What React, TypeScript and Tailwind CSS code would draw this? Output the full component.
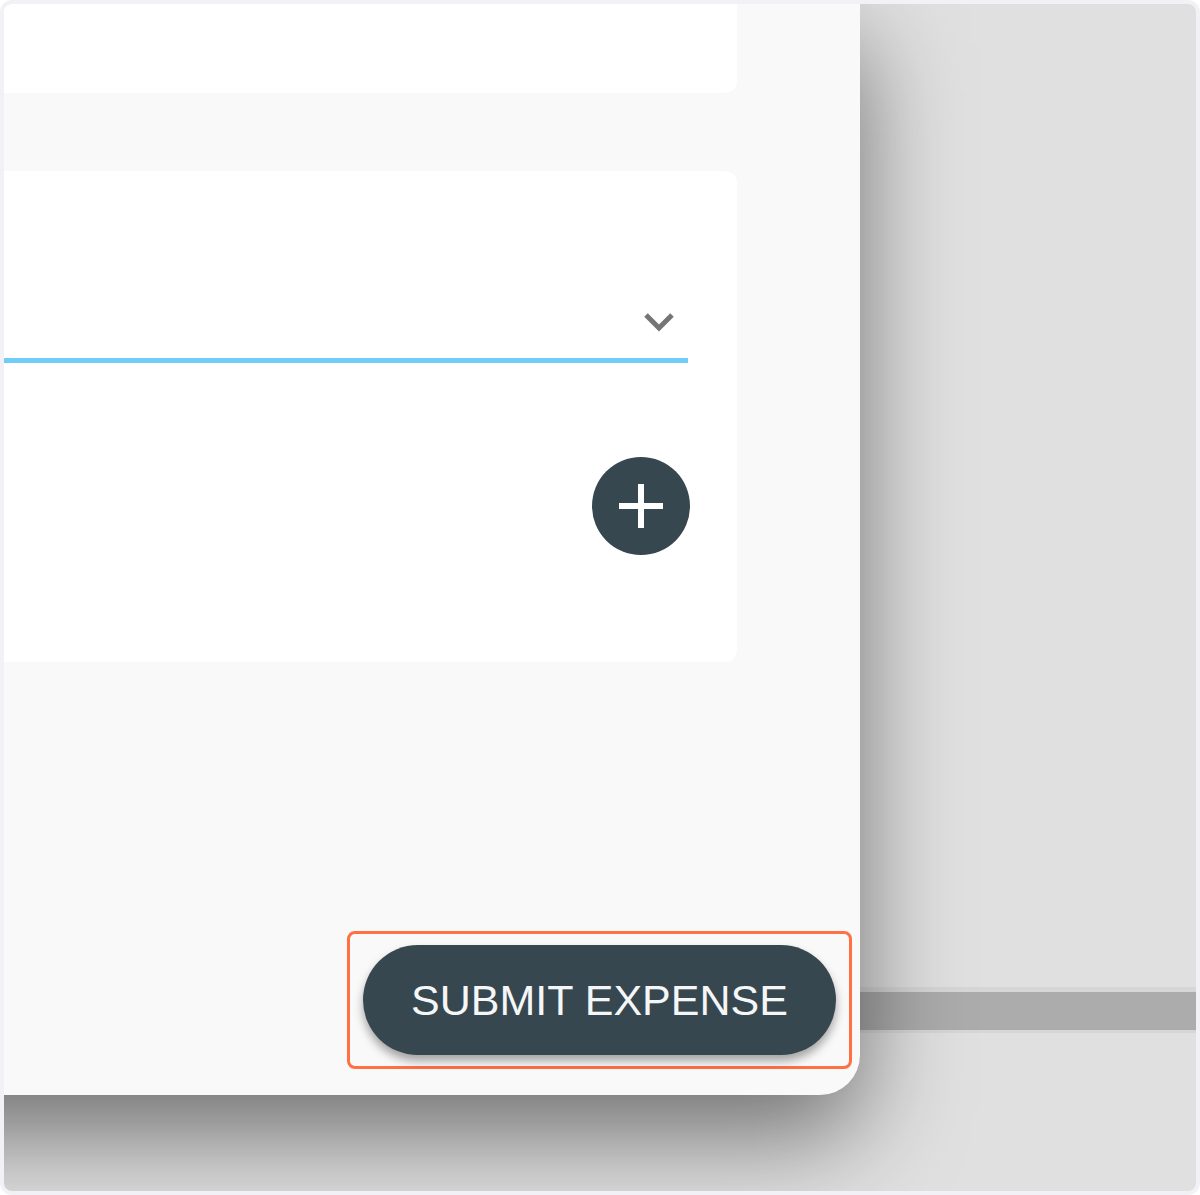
export default function App() {
  return (
    <div className="w-[1200px] h-[1195px] bg-white">
      <div className="relative w-full h-full rounded-[12px] border-4 border-[#f2f1f6] overflow-hidden bg-[#e0e0e0]">
        {/* page behind the dialog */}
        <div className="pt-[983px]">
          <div className="h-[5px] bg-[#d6d6d6]" />
          <div className="h-[38px] bg-[#acacac]" />
          <div className="h-[3px] bg-[#d6d6d6]" />
        </div>

        {/* dialog */}
        <div
          className="absolute left-[-300px] top-0 w-[1156px] h-[1091px] bg-[#f9f9f9] rounded-br-[40px] shadow-[0_40px_100px_rgba(0,0,0,0.5)] flex flex-col pl-[300px]"
          style={{ fontFamily: '"Liberation Sans", Arial, sans-serif' }}
        >
          <div className="mr-[123px] h-[89px] bg-white rounded-br-[12px]" />

          <div className="mr-[123px] mt-[78px] h-[491px] bg-white rounded-r-[12px] flex flex-col pr-[49px]">
            <div className="mt-[140px] h-[47px] flex justify-end items-start">
              <svg width="32" height="22" viewBox="0 0 32 22" className="mr-[13px]">
                <path d="M3 4 L16 17 L29 4" fill="none" stroke="#757575" strokeWidth="5" />
              </svg>
            </div>
            <div className="h-[5px] bg-[#72cdf6]" />
            <div className="mt-[94px] flex justify-end">
              <button className="w-[98px] h-[98px] rounded-full bg-[#37474f] flex items-center justify-center mr-[-2px]">
                <svg width="46" height="46" viewBox="0 0 46 46">
                  <path d="M23 1 V45 M1 23 H45" stroke="white" strokeWidth="6" fill="none" />
                </svg>
              </button>
            </div>
          </div>

          <div className="flex-1" />

          <div className="flex justify-end pr-[8px] pb-[26px]">
            <div className="border-[3px] border-[#ff7043] rounded-[8px] px-[13px] py-[11px]">
              <button className="w-[473px] h-[110px] rounded-full bg-[#37474f] text-[#f4f6f7] text-[43px] leading-none shadow-[0_6px_10px_rgba(0,0,0,0.35)]">
                SUBMIT EXPENSE
              </button>
            </div>
          </div>
        </div>
      </div>
    </div>
  );
}
